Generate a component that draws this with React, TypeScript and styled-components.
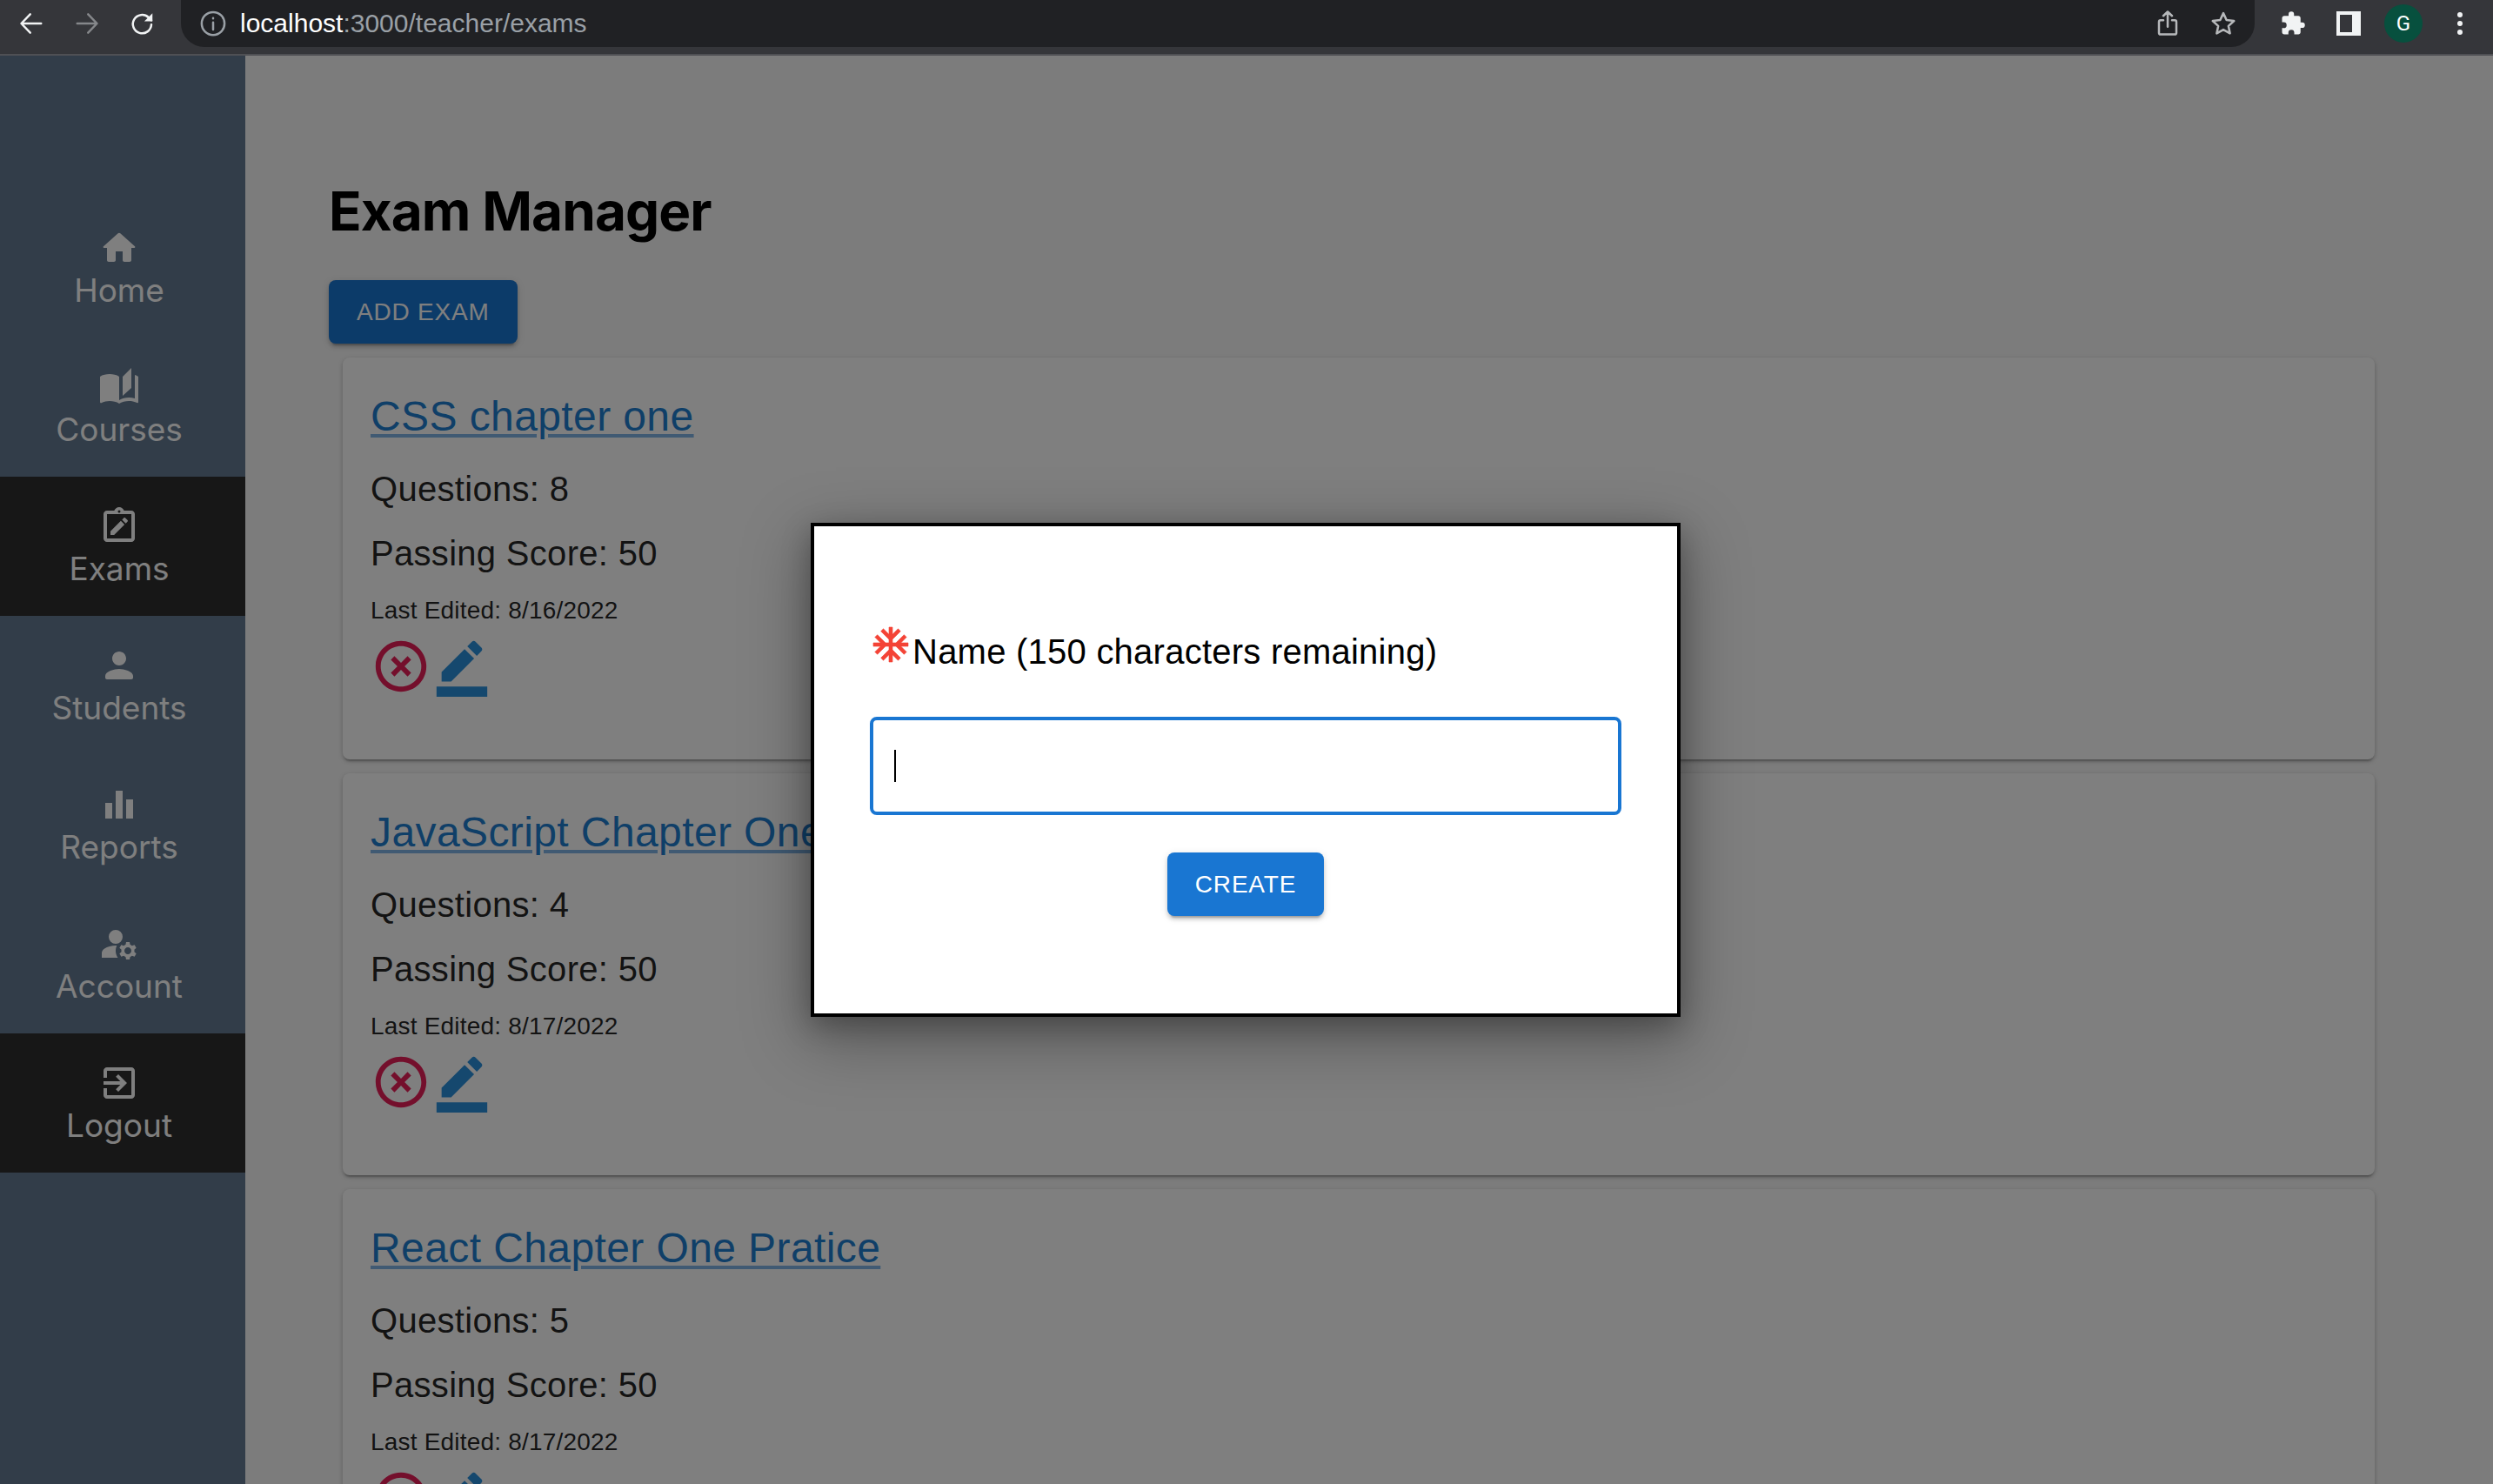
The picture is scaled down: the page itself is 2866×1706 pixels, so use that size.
import React from "react";
import styled, { createGlobalStyle } from "styled-components";

const GlobalStyle = createGlobalStyle`
  html, body {
    margin: 0;
    padding: 0;
    background: #f8f8f8;
  }
  body {
    font-family: "Liberation Sans", Arial, sans-serif;
  }
  * {
    box-sizing: border-box;
  }
`;

const Page = styled.div`
  position: relative;
  width: 2866px;
  height: 1706px;
  overflow: hidden;
`;

/* browser chrome */
const BrowserBar = styled.div`
  height: 64px;
  background: #35363a;
  border-bottom: 2px solid #4f5054;
  display: flex;
  align-items: flex-start;
`;

const NavButtons = styled.div`
  width: 208px;
  height: 62px;
  display: flex;
  align-items: flex-start;
  padding: 12px 0 0 21px;
  gap: 34px;
  flex-shrink: 0;
`;

const AddressBar = styled.div`
  width: 2384px;
  height: 54px;
  background: #202124;
  border-radius: 0 0 27px 27px;
  display: flex;
  align-items: center;
  padding: 0 21px 0 22px;
  flex-shrink: 0;
`;

const Url = styled.div`
  margin-left: 16px;
  font-size: 30px;
  line-height: 54px;
  color: #9aa0a6;
  flex: 1;
`;

const UrlHost = styled.span`
  color: #fff;
`;

const AddressActions = styled.div`
  display: flex;
  align-items: center;
  gap: 34px;
`;

const ToolbarIcons = styled.div`
  flex: 1;
  height: 54px;
  display: flex;
  align-items: center;
  padding-left: 29px;
  gap: 34px;
`;

const Avatar = styled.div`
  width: 44px;
  height: 44px;
  border-radius: 50%;
  background: #07503e;
  color: #fff;
  font-family: Roboto, sans-serif;
  font-size: 24px;
  display: flex;
  align-items: center;
  justify-content: center;
  margin: 0 -4px 0 -8px;
`;

const Dots = styled.div`
  display: flex;
  flex-direction: column;
  gap: 4px;
  margin-left: 10px;
`;

const Dot = styled.span`
  width: 6px;
  height: 6px;
  border-radius: 50%;
  background: #f1f3f4;
`;

/* app */
const Body = styled.div`
  display: flex;
  height: 1642px;
`;

const Sidebar = styled.nav`
  width: 282px;
  flex-shrink: 0;
  background: #647a92;
  padding-top: 164px;
`;

const NavItem = styled.div<{ $dark?: boolean }>`
  height: 160px;
  padding: 33px 8px 0 0;
  display: flex;
  flex-direction: column;
  align-items: center;
  color: #fff;
  background: ${(p) => (p.$dark ? "#2e2e2e" : "transparent")};
  font-family: Inter, sans-serif;
  font-size: 37px;
  line-height: 50px;
`;

const Main = styled.main`
  flex: 1;
  padding: 0 136px 0 96px;
`;

const Title = styled.h1`
  margin: 0;
  padding-top: 140px;
  font-family: Inter, sans-serif;
  font-size: 62px;
  line-height: 77px;
  font-weight: 700;
  letter-spacing: -0.9px;
  color: #000;
`;

const Button = styled.button`
  height: 73px;
  padding: 0 32px;
  border: 0;
  border-radius: 8px;
  background: #1976d2;
  color: #fff;
  font-family: "Liberation Sans", Arial, sans-serif;
  font-size: 28px;
  letter-spacing: 0.8px;
  text-transform: uppercase;
  box-shadow: 0 6px 2px -4px rgba(0, 0, 0, 0.2), 0 4px 4px 0 rgba(0, 0, 0, 0.14),
    0 2px 10px 0 rgba(0, 0, 0, 0.12);
`;

const AddExam = styled(Button)`
  display: block;
  margin-top: 41px;
`;

const Cards = styled.div`
  margin: 16px 0 0 16px;
  display: flex;
  flex-direction: column;
  gap: 16px;
`;

const Card = styled.article`
  height: 462px;
  flex-shrink: 0;
  padding: 40px 32px 0;
  background: #fff;
  border-radius: 8px;
  box-shadow: 0 4px 2px -2px rgba(0, 0, 0, 0.2), 0 2px 4px 0 rgba(0, 0, 0, 0.14),
    0 2px 6px 0 rgba(0, 0, 0, 0.12);
`;

const ExamLink = styled.a`
  display: block;
  font-size: 48px;
  line-height: 56px;
  letter-spacing: 0.4px;
  color: #1f7fd0;
  text-decoration: underline;
  text-decoration-color: rgba(25, 118, 210, 0.55);
  text-decoration-thickness: 4px;
  text-underline-offset: 4px;
`;

const Stat = styled.p`
  margin: 26px 0 0;
  font-size: 40px;
  line-height: 48px;
  letter-spacing: 0.3px;
  color: rgba(0, 0, 0, 0.87);

  ${ExamLink} + & {
    margin-top: 31px;
  }
`;

const Edited = styled.p`
  margin: 22px 0 0;
  font-size: 28px;
  line-height: 40px;
  letter-spacing: 0.2px;
  color: rgba(0, 0, 0, 0.87);
`;

const Actions = styled.div`
  margin-top: 9px;
  display: flex;
`;

const Icon = styled.svg<{ $size: number; $color?: string }>`
  width: ${(p) => p.$size}px;
  height: ${(p) => p.$size}px;
  flex-shrink: 0;
  display: block;
  fill: ${(p) => p.$color ?? "currentColor"};
`;

/* modal */
const Overlay = styled.div`
  position: absolute;
  inset: 64px 0 0 0;
  background: rgba(0, 0, 0, 0.5);
  display: flex;
  align-items: center;
  justify-content: center;
  padding-right: 2px;
`;

const Modal = styled.div`
  width: 1000px;
  height: 568px;
  background: #fff;
  border: 4px solid #000;
  padding: 112px 64px 0;
  box-shadow: 0 22px 70px 6px rgba(0, 0, 0, 0.3), 0 10px 30px 0 rgba(0, 0, 0, 0.25);
  display: flex;
  flex-direction: column;
  align-items: center;
`;

const LabelRow = styled.div`
  width: 100%;
  display: flex;
  align-items: flex-start;
  gap: 1px;
`;

const Label = styled.label`
  margin-top: 8px;
  font-size: 40px;
  line-height: 48px;
  letter-spacing: 0.24px;
  color: #000;
`;

const InputBox = styled.div`
  width: 100%;
  height: 113px;
  margin-top: 51px;
  border: 4px solid #1976d2;
  border-radius: 8px;
  padding-left: 24px;
  display: flex;
  align-items: center;
`;

const Caret = styled.span`
  width: 2px;
  height: 37px;
  background: #000;
`;

const CreateButton = styled(Button)`
  margin-top: 43px;
`;

const exams = [
  { name: "CSS chapter one", questions: 8, edited: "8/16/2022" },
  { name: "JavaScript Chapter One", questions: 4, edited: "8/17/2022" },
  { name: "React Chapter One Pratice", questions: 5, edited: "8/17/2022" },
];

const navItems = [
  {
    label: "Home",
    d: "M10 19v-5h4v5c0 .55.45 1 1 1h3c.55 0 1-.45 1-1v-7h1.7c.46 0 .68-.57.33-.87L12.67 3.6c-.38-.34-.96-.34-1.34 0l-8.36 7.53c-.34.3-.13.87.33.87H5v7c0 .55.45 1 1 1h3c.55 0 1-.45 1-1z",
  },
  {
    label: "Courses",
    d: "M19 1l-5 5v11l5-4.5V1zM1 6v14.65c0 .25.25.5.5.5.1 0 .15-.05.25-.05C3.1 20.45 5.05 20 6.5 20c1.95 0 4.05.4 5.5 1.5V6c-1.45-1.1-3.55-1.5-5.5-1.5S2.45 4.9 1 6zm22 13.5V6c-.6-.45-1.25-.75-2-1v13.5c-1.1-.35-2.3-.5-3.5-.5-1.7 0-4.15.65-5.5 1.5v2c1.35-.85 3.8-1.5 5.5-1.5 1.65 0 3.35.3 4.75 1.05.1.05.15.05.25.05.25 0 .5-.25.5-.5v-1.1z",
  },
  {
    label: "Exams",
    dark: true,
    d: "M19 3h-4.18C14.4 1.84 13.3 1 12 1s-2.4.84-2.82 2H5c-1.1 0-2 .9-2 2v14c0 1.1.9 2 2 2h14c1.1 0 2-.9 2-2V5c0-1.1-.9-2-2-2zm-7-.25c.22 0 .41.1.55.25.12.13.2.31.2.5 0 .41-.34.75-.75.75s-.75-.34-.75-.75c0-.19.08-.37.2-.5.14-.15.33-.25.55-.25zM19 19H5V5h14v14zM15.08 11.03l-2.12-2.12L7 14.86V17h2.1zM16.85 9.27c.2-.2.2-.51 0-.71l-1.41-1.41c-.2-.2-.51-.2-.71 0l-1.06 1.06 2.12 2.12 1.06-1.06z",
  },
  {
    label: "Students",
    d: "M12 12c2.21 0 4-1.79 4-4s-1.79-4-4-4-4 1.79-4 4 1.79 4 4 4zm0 2c-2.67 0-8 1.34-8 4v1c0 .55.45 1 1 1h14c.55 0 1-.45 1-1v-1c0-2.66-5.33-4-8-4z",
  },
  { label: "Reports", d: "M4 11h4v9H4zM10 4h4v16h-4zM16 9h4v11h-4z" },
  {
    label: "Account",
    d: "M10 4a4 4 0 1 0 0 8 4 4 0 0 0 0-8zM10.67 13.02c-.22-.01-.44-.02-.67-.02-2.42 0-4.68.67-6.61 1.82-.88.52-1.39 1.5-1.39 2.53V20h9.26c-.79-1.13-1.26-2.51-1.26-4 0-1.07.25-2.07.67-2.98zM20.75 16c0-.22-.03-.42-.06-.63l1.14-1.01-1-1.73-1.45.49c-.32-.27-.68-.48-1.08-.63L18 11h-2l-.3 1.49c-.4.15-.76.36-1.08.63l-1.45-.49-1 1.73 1.14 1.01c-.03.21-.06.41-.06.63s.03.42.06.63l-1.14 1.01 1 1.73 1.45-.49c.32.27.68.48 1.08.63L16 21h2l.3-1.49c.4-.15.76-.36 1.08-.63l1.45.49 1-1.73-1.14-1.01c.03-.21.06-.41.06-.63zM17 18c-1.1 0-2-.9-2-2s.9-2 2-2 2 .9 2 2-.9 2-2 2z",
  },
  {
    label: "Logout",
    dark: true,
    d: "M10.09 15.59L11.5 17l5-5-5-5-1.41 1.41L12.67 11H3v2h9.67l-2.58 2.59zM19 3H5c-1.11 0-2 .9-2 2v4h2V5h14v14H5v-4H3v4c0 1.1.89 2 2 2h14c1.1 0 2-.9 2-2V5c0-1.1-.9-2-2-2z",
  },
];

const StrokeIcon = styled.svg<{ $color: string }>`
  display: block;
  flex-shrink: 0;
  width: 30px;
  height: 30px;
  fill: none;
  stroke: ${(p) => p.$color};
  stroke-width: 2;
  stroke-linecap: round;
  stroke-linejoin: round;
`;

const DeleteIcon = () => (
  <Icon $size={70} $color="#e81e58" viewBox="0 0 24 24">
    <path d="M14.59 8 12 10.59 9.41 8 8 9.41 10.59 12 8 14.59 9.41 16 12 13.41 14.59 16 16 14.59 13.41 12 16 9.41 14.59 8zM12 2C6.47 2 2 6.47 2 12s4.47 10 10 10 10-4.47 10-10S17.53 2 12 2zm0 18c-4.41 0-8-3.59-8-8s3.59-8 8-8 8 3.59 8 8-3.59 8-8 8z" />
  </Icon>
);

const EditIcon = () => (
  <Icon $size={70} $color="#2a90dc" viewBox="0 0 24 24">
    <path d="M22 24H2v-4h20v4zM13.06 5.19l3.75 3.75L7.75 18H4v-3.75l9.06-9.06zm4.82 2.68-3.75-3.75 1.83-1.83c.39-.39 1.02-.39 1.41 0l2.34 2.34c.39.39.39 1.02 0 1.41l-1.83 1.83z" />
  </Icon>
);

export default function App() {
  return (
    <Page>
      <GlobalStyle />
      <BrowserBar>
        <NavButtons>
          <StrokeIcon $color="#f1f3f4" viewBox="0 0 24 24">
            <path d="M21 12H3M11 3.5 2.8 12l8.2 8.5" />
          </StrokeIcon>
          <StrokeIcon $color="#85878a" viewBox="0 0 24 24">
            <path d="M3 12h18M13 3.5l8.2 8.5-8.2 8.5" />
          </StrokeIcon>
          <StrokeIcon $color="#f1f3f4" viewBox="0 0 24 24">
            <path d="M20 13a8.5 8.5 0 1 1-2.6-6.6L20 9" />
            <path d="M21 2.5V10h-7.5z" fill="#f1f3f4" stroke="none" />
          </StrokeIcon>
        </NavButtons>
        <AddressBar>
          <StrokeIcon $color="#9aa0a6" viewBox="0 0 24 24">
            <circle cx="12" cy="12" r="10.5" />
            <path d="M12 11v6.5M12 7v.4" />
          </StrokeIcon>
          <Url>
            <UrlHost>localhost</UrlHost>:3000/teacher/exams
          </Url>
          <AddressActions>
            <StrokeIcon $color="#b6b8ba" viewBox="0 0 24 24">
              <path d="M8 9H5.5A1.5 1.5 0 0 0 4 10.5v10A1.5 1.5 0 0 0 5.5 22h13a1.5 1.5 0 0 0 1.5-1.500v-10A1.500 1.500 0 0 0 18.500 9H16M12 15V1.500M8 5l4-3.800L16 5" />
            </StrokeIcon>
            <StrokeIcon $color="#b6b8ba" viewBox="0 0 24 24">
              <path d="m12 2.500 2.900 6.300 6.900.8-5.100 4.700 1.400 6.800-6.100-3.400-6.100 3.400 1.400-6.800-5.100-4.700 6.900-.8z" />
            </StrokeIcon>
          </AddressActions>
        </AddressBar>
        <ToolbarIcons>
          <Icon $size={30} $color="#f1f3f4" viewBox="0 0 24 24">
            <path d="M20.500 11H19V7c0-1.100-.9-2-2-2h-4V3.500a2.500 2.500 0 0 0-5 0V5H4c-1.100 0-2 .9-2 2v3.800h1.500a2.700 2.700 0 0 1 0 5.400H2V20c0 1.100.9 2 2 2h3.800v-1.500a2.700 2.700 0 0 1 5.400 0V22H17c1.100 0 2-.9 2-2v-4h1.500a2.500 2.500 0 0 0 0-5z" />
          </Icon>
          <Icon $size={30} $color="#f1f3f4" viewBox="0 0 30 30">
            <path fillRule="evenodd" d="M1 1h28v28H1zM5 5v20h14V5z" />
          </Icon>
          <Avatar>G</Avatar>
          <Dots>
            <Dot />
            <Dot />
            <Dot />
          </Dots>
        </ToolbarIcons>
      </BrowserBar>

      <Body>
        <Sidebar>
          {navItems.map((item) => (
            <NavItem key={item.label} $dark={item.dark}>
              <Icon $size={48} viewBox="0 0 24 24">
                <path d={item.d} />
              </Icon>
              {item.label}
            </NavItem>
          ))}
        </Sidebar>
        <Main>
          <Title>Exam Manager</Title>
          <AddExam>Add Exam</AddExam>
          <Cards>
            {exams.map((exam) => (
              <Card key={exam.name}>
                <ExamLink href="#">{exam.name}</ExamLink>
                <Stat>Questions: {exam.questions}</Stat>
                <Stat>Passing Score: 50</Stat>
                <Edited>Last Edited: {exam.edited}</Edited>
                <Actions>
                  <DeleteIcon />
                  <EditIcon />
                </Actions>
              </Card>
            ))}
          </Cards>
        </Main>
      </Body>

      <Overlay>
        <Modal>
          <LabelRow>
            <Icon $size={48} $color="#f44336" viewBox="0 0 24 24">
              <path
                stroke="#f44336"
                strokeWidth="0.3"
                strokeLinejoin="round"
                d="M22 11h-4.170l3.240-3.240-1.410-1.420L15 11h-2V9l4.660-4.660-1.420-1.410L13 6.170V2h-2v4.170L7.760 2.930 6.340 4.340 11 9v2H9L4.340 6.340 2.930 7.760 6.170 11H2v2h4.170l-3.240 3.240 1.410 1.420L9 13h2v2l-4.660 4.660 1.420 1.410L11 17.830V22h2v-4.170l3.240 3.240 1.420-1.410L13 15v-2h2l4.660 4.660 1.410-1.420L17.830 13H22z"
              />
            </Icon>
            <Label>Name (150 characters remaining)</Label>
          </LabelRow>
          <InputBox>
            <Caret />
          </InputBox>
          <CreateButton>Create</CreateButton>
        </Modal>
      </Overlay>
    </Page>
  );
}
